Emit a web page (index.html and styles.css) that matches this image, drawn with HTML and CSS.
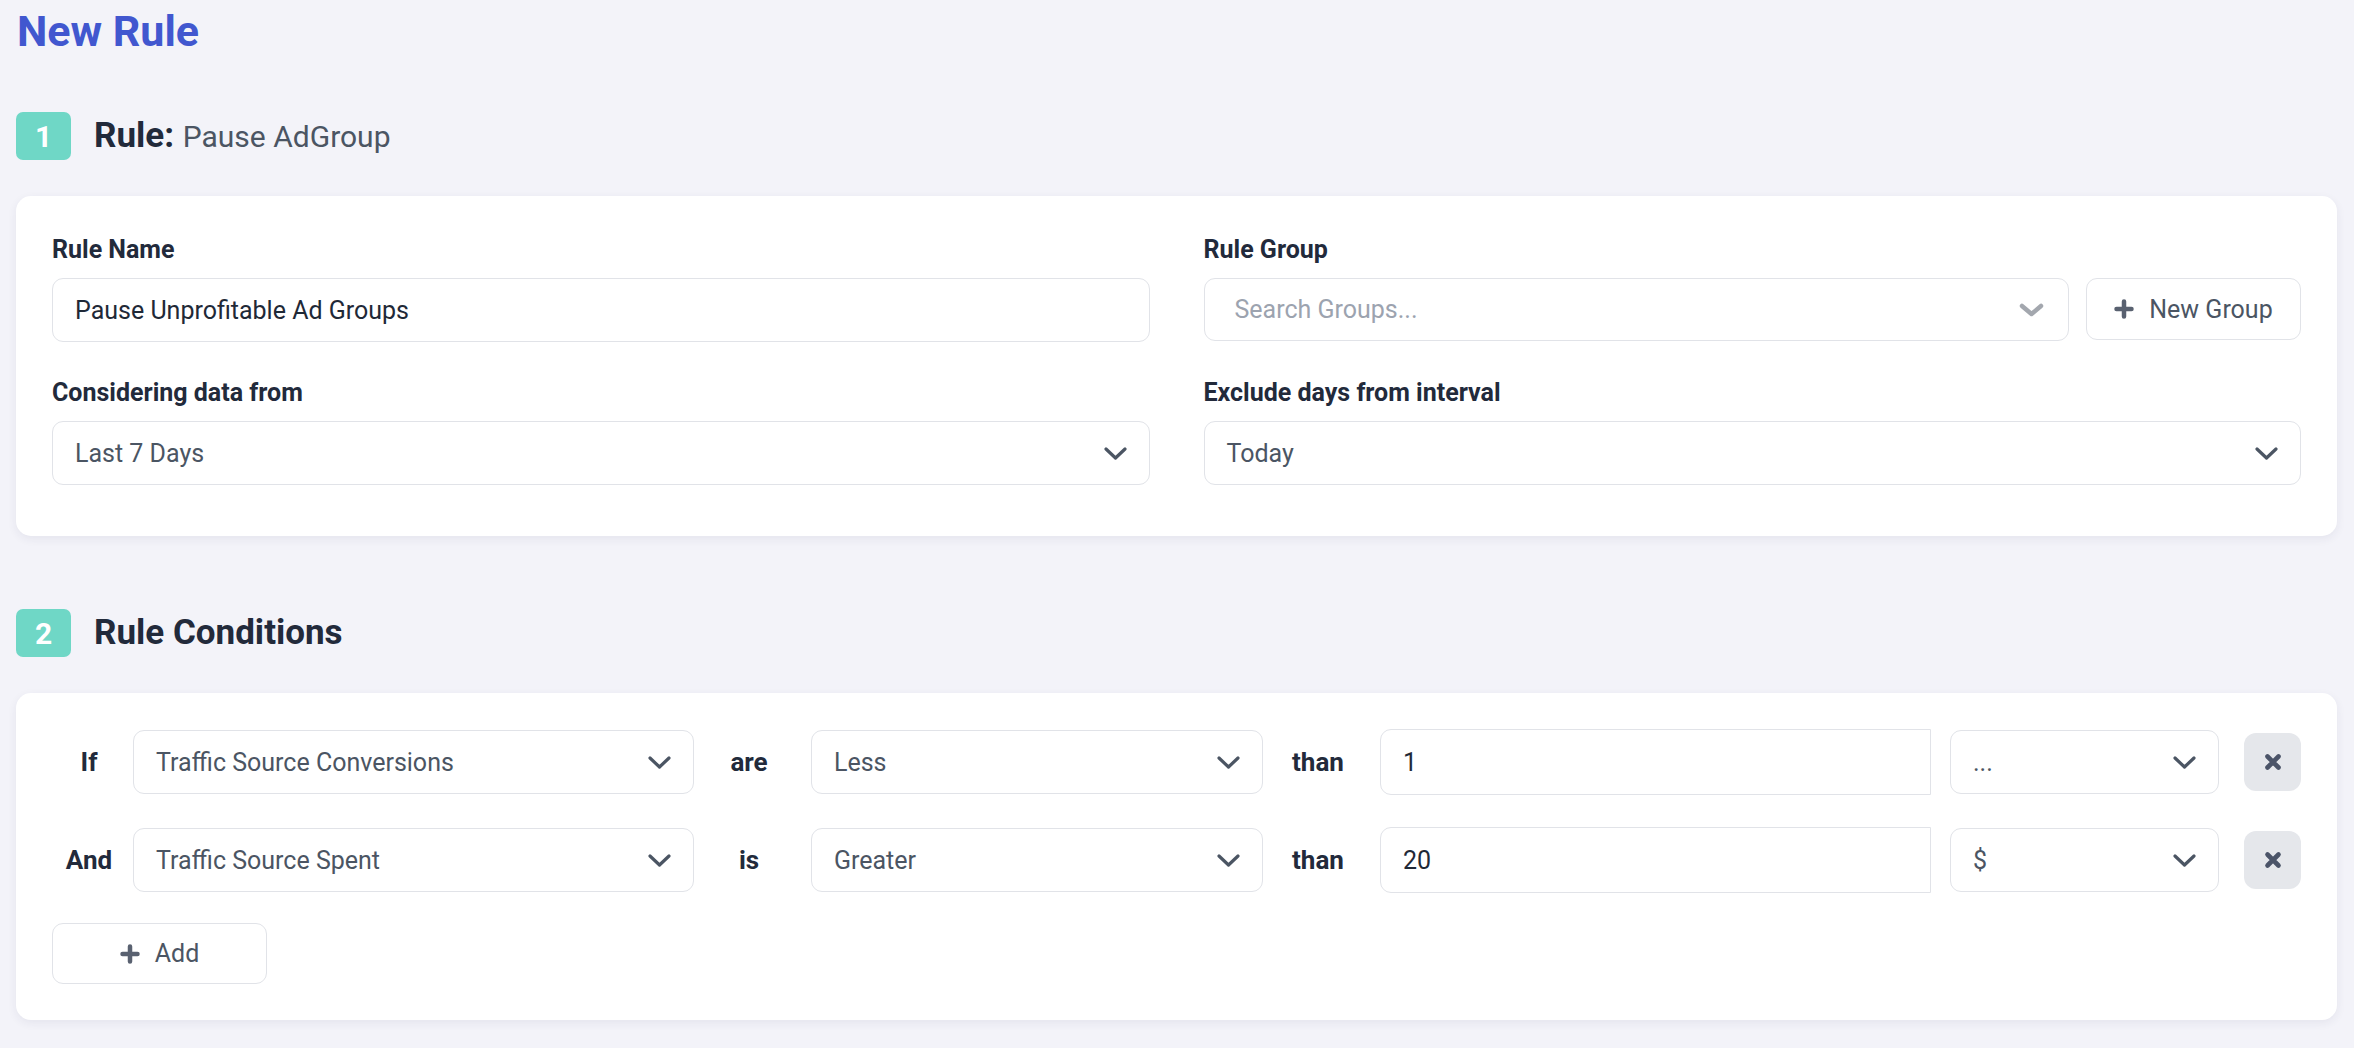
FILE: index.html
```html
<!DOCTYPE html>
<html lang="en">
<head>
  <meta charset="UTF-8">
  <title>New Rule</title>
  <link rel="stylesheet" href="styles.css">
</head>
<body>
  <main class="page">
    <h1 class="page-title">New Rule</h1>

    <!-- STEP 1 -->
    <div class="step-head">
      <span class="step-num">1</span>
      <h2 class="step-title">Rule: <span class="step-sub">Pause AdGroup</span></h2>
    </div>
    <div class="card card-rule">
      <div class="field">
        <label class="field-label" for="ruleName">Rule Name</label>
        <input class="control" id="ruleName" type="text" value="Pause Unprofitable Ad Groups">
      </div>
      <div class="field">
        <span class="field-label">Rule Group</span>
        <div class="group-row">
          <div class="control search">
            <span>Search Groups...</span>
            <svg class="chev-light" width="25" height="14" viewBox="0 0 25 14"><path d="M3 3l9.5 8 9.5-8" fill="none" stroke="currentColor" stroke-width="4.5" stroke-linecap="round" stroke-linejoin="round"/></svg>
          </div>
          <button class="btn">
            <svg width="20" height="20" viewBox="0 0 20 20"><path d="M10 2.5v15M2.5 10h15" stroke="currentColor" stroke-width="4.5" stroke-linecap="round"/></svg>
            New Group
          </button>
        </div>
      </div>
      <div class="field">
        <span class="field-label">Considering data from</span>
        <div class="control select">
          <span>Last 7 Days</span>
          <svg class="chev" width="23" height="13" viewBox="0 0 23 13"><path d="M2 2l9.5 9 9.5-9" fill="none" stroke="currentColor" stroke-width="3.2" stroke-linecap="round" stroke-linejoin="round"/></svg>
        </div>
      </div>
      <div class="field">
        <span class="field-label">Exclude days from interval</span>
        <div class="control select">
          <span>Today</span>
          <svg class="chev" width="23" height="13" viewBox="0 0 23 13"><path d="M2 2l9.5 9 9.5-9" fill="none" stroke="currentColor" stroke-width="3.2" stroke-linecap="round" stroke-linejoin="round"/></svg>
        </div>
      </div>
    </div>

    <!-- STEP 2 -->
    <div class="step-head second">
      <span class="step-num">2</span>
      <h2 class="step-title">Rule Conditions</h2>
    </div>
    <div class="card card-cond">
      <div class="cond-list">
        <div class="cond-row">
          <span class="cond-word">If</span>
          <div class="control select">
            <span>Traffic Source Conversions</span>
            <svg class="chev" width="23" height="13" viewBox="0 0 23 13"><path d="M2 2l9.5 9 9.5-9" fill="none" stroke="currentColor" stroke-width="3.2" stroke-linecap="round" stroke-linejoin="round"/></svg>
          </div>
          <span class="cond-word">are</span>
          <div class="control select">
            <span>Less</span>
            <svg class="chev" width="23" height="13" viewBox="0 0 23 13"><path d="M2 2l9.5 9 9.5-9" fill="none" stroke="currentColor" stroke-width="3.2" stroke-linecap="round" stroke-linejoin="round"/></svg>
          </div>
          <span class="cond-word">than</span>
          <input class="control value" type="text" value="1">
          <div class="control select unit">
            <span>...</span>
            <svg class="chev" width="23" height="13" viewBox="0 0 23 13"><path d="M2 2l9.5 9 9.5-9" fill="none" stroke="currentColor" stroke-width="3.2" stroke-linecap="round" stroke-linejoin="round"/></svg>
          </div>
          <button class="remove">
            <svg width="18" height="18" viewBox="0 0 18 18"><path d="M3.5 3.5l11 11M14.5 3.5l-11 11" stroke="currentColor" stroke-width="4.6" stroke-linecap="round"/></svg>
          </button>
        </div>
        <div class="cond-row">
          <span class="cond-word">And</span>
          <div class="control select">
            <span>Traffic Source Spent</span>
            <svg class="chev" width="23" height="13" viewBox="0 0 23 13"><path d="M2 2l9.5 9 9.5-9" fill="none" stroke="currentColor" stroke-width="3.2" stroke-linecap="round" stroke-linejoin="round"/></svg>
          </div>
          <span class="cond-word">is</span>
          <div class="control select">
            <span>Greater</span>
            <svg class="chev" width="23" height="13" viewBox="0 0 23 13"><path d="M2 2l9.5 9 9.5-9" fill="none" stroke="currentColor" stroke-width="3.2" stroke-linecap="round" stroke-linejoin="round"/></svg>
          </div>
          <span class="cond-word">than</span>
          <input class="control value" type="text" value="20">
          <div class="control select unit">
            <span>$</span>
            <svg class="chev" width="23" height="13" viewBox="0 0 23 13"><path d="M2 2l9.5 9 9.5-9" fill="none" stroke="currentColor" stroke-width="3.2" stroke-linecap="round" stroke-linejoin="round"/></svg>
          </div>
          <button class="remove">
            <svg width="18" height="18" viewBox="0 0 18 18"><path d="M3.5 3.5l11 11M14.5 3.5l-11 11" stroke="currentColor" stroke-width="4.6" stroke-linecap="round"/></svg>
          </button>
        </div>
      </div>
      <button class="btn btn-add">
        <svg width="20" height="20" viewBox="0 0 20 20"><path d="M10 2.5v15M2.5 10h15" stroke="currentColor" stroke-width="4.5" stroke-linecap="round"/></svg>
        Add
      </button>
    </div>
  </main>
</body>
</html>
```

FILE: styles.css
```css
* {
  box-sizing: border-box;
}
body {
  margin: 0;
  background: #f3f3f9;
  font-family: Roboto, "Liberation Sans", sans-serif;
  color: #1f2937;
}
.page {
  padding: 4px 17px 30px 16px;
}
.page-title {
  margin: 0;
  padding-left: 1px;
  font-size: 43px;
  line-height: 54px;
  font-weight: 700;
  color: #4157cf;
}
.step-head {
  display: flex;
  align-items: center;
  gap: 23px;
  height: 48px;
  margin: 54px 0 36px;
}
.step-head.second {
  margin-top: 73px;
}
.step-num {
  width: 55px;
  height: 48px;
  border-radius: 7px;
  background: #6fd7c6;
  color: #fff;
  font-size: 30px;
  font-weight: 700;
  display: flex;
  align-items: center;
  justify-content: center;
}
.step-title {
  margin: 0;
  font-size: 35px;
  line-height: 48px;
  font-weight: 700;
  color: #222a3b;
}
.step-sub {
  font-size: 30px;
  font-weight: 400;
  color: #4b5563;
}
.card {
  background: #fff;
  border-radius: 15px;
  box-shadow: 0 3px 10px rgba(40, 40, 80, 0.07);
}
.card-rule {
  padding: 38px 36px 51px;
  display: grid;
  grid-template-columns: 1fr 1fr;
  column-gap: 54px;
  row-gap: 35px;
}
.field-label {
  display: block;
  margin-bottom: 12px;
  font-size: 25px;
  line-height: 32px;
  font-weight: 700;
  color: #222a3b;
}
.control {
  height: 64px;
  padding: 0 22px;
  border: 1px solid #e1e3e8;
  border-radius: 11px;
  background: #fff;
  display: flex;
  align-items: center;
  font-size: 25px;
  color: #4b5563;
}
input.control {
  width: 100%;
  font-family: inherit;
  color: #1f2937;
  outline: none;
}
.select {
  justify-content: space-between;
}
.chev {
  color: #4b5563;
  flex-shrink: 0;
}
.group-row {
  display: flex;
  align-items: flex-start;
  gap: 17px;
}
.search {
  flex: 1;
  height: 63px;
  padding: 0 24px 0 30px;
  justify-content: space-between;
  color: #9ca3af;
}
.chev-light {
  color: #a3a7ae;
}
.btn {
  width: 215px;
  height: 62px;
  border: 1px solid #e1e3e8;
  border-radius: 11px;
  background: #fff;
  display: flex;
  align-items: center;
  justify-content: center;
  gap: 15px;
  font-family: inherit;
  font-size: 25px;
  color: #4b5563;
  flex-shrink: 0;
}
.btn svg {
  color: #596170;
}
.card-cond {
  padding: 36px;
}
.cond-list {
  display: flex;
  flex-direction: column;
  gap: 32px;
}
.cond-row {
  display: grid;
  grid-template-columns: 81px 561px 117px 452px 117px 1fr 288px 82px;
  align-items: center;
}
.cond-word {
  padding-right: 7px;
  text-align: center;
  font-size: 26px;
  font-weight: 700;
  color: #222a3b;
}
.value {
  height: 66px;
  border-radius: 11px 0 0 11px;
}
.unit {
  margin-left: 19px;
}
.remove {
  width: 57px;
  height: 58px;
  margin-left: 25px;
  border: 0;
  border-radius: 12px;
  background: #e5e7eb;
  color: #4b5468;
  display: flex;
  align-items: center;
  justify-content: center;
}
.btn-add {
  margin-top: 30px;
  height: 61px;
}
```
